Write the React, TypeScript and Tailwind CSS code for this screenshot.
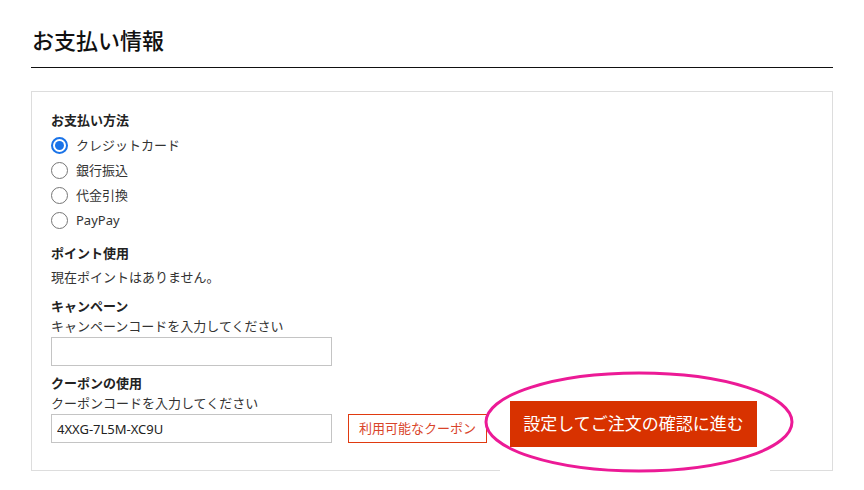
import { useState } from 'react';

const METHODS = ['クレジットカード', '銀行振込', '代金引換', 'PayPay'];

function Radio({ checked, label, onClick }: { checked: boolean; label: string; onClick: () => void }) {
  return (
    <label className="flex items-center h-[25px] cursor-pointer" onClick={onClick}>
      <span
        className={
          checked
            ? 'w-[17px] h-[17px] rounded-full border-2 border-[#1a73e8] flex items-center justify-center'
            : 'w-[17px] h-[17px] rounded-full border border-[#767676] bg-white'
        }
      >
        {checked && <span className="w-[9px] h-[9px] rounded-full bg-[#1a73e8]" />}
      </span>
      <span className="ml-[8px] text-[13px] text-[#333]">{label}</span>
    </label>
  );
}

export default function App() {
  const [method, setMethod] = useState(0);

  return (
    <div className="w-[864px] h-[490px] bg-white px-[31px] pt-[24px] text-[#333]" style={{ fontFamily: '"Noto Sans", "Noto Sans CJK JP", sans-serif' }}>
      <h2 className="text-[22px] font-medium leading-[32px] text-[#111] pl-[1px] pb-[11px] border-b border-[#111]">お支払い情報</h2>

      <div className="relative mt-[23px] w-[802px] h-[380px] border border-[#ddd] pl-[19px] pt-[18px]">
        <p className="text-[13px] font-bold leading-[20px] text-[#222]">お支払い方法</p>
        <div className="flex flex-col mt-[3px]">
          {METHODS.map((m, i) => (
            <Radio key={m} label={m} checked={method === i} onClick={() => setMethod(i)} />
          ))}
        </div>

        <p className="mt-[10px] text-[13px] font-bold leading-[20px] text-[#222]">ポイント使用</p>
        <p className="mt-[4px] text-[13px] leading-[20px]">現在ポイントはありません。</p>

        <p className="mt-[9px] text-[13px] font-bold leading-[20px] text-[#222]">キャンペーン</p>
        <p className="text-[13px] leading-[20px]">キャンペーンコードを入力してください</p>
        <input className="mt-[1px] block w-[281px] h-[29px] border border-[#c4c4c4] px-[5px] text-[13px] outline-none" />

        <p className="mt-[7px] text-[13px] font-bold leading-[20px] text-[#222]">クーポンの使用</p>
        <p className="text-[13px] leading-[20px]">クーポンコードを入力してください</p>
        <div className="flex items-center mt-[1px]">
          <input
            className="block w-[281px] h-[29px] border border-[#c4c4c4] px-[5px] text-[13px] text-[#222] outline-none"
            defaultValue="4XXG-7L5M-XC9U"
          />
          <button className="ml-[16px] h-[29px] px-[10px] border border-[#e03a10] text-[13px] text-[#d9442a] bg-white">
            利用可能なクーポン
          </button>
        </div>

        {/* white strip over the bottom border under the highlight */}
        <div className="absolute left-[468px] bottom-[-2px] w-[270px] h-[3px] bg-white" />

        <button className="absolute left-[478px] top-[309px] w-[247px] h-[46px] bg-[#d83200] text-white text-[17px] font-normal">
          設定してご注文の確認に進む
        </button>

        <svg className="absolute left-[450px] top-[277px]" width="315" height="108" viewBox="0 0 315 108">
          <ellipse cx="157" cy="53" rx="153" ry="49" fill="none" stroke="#ec1a96" strokeWidth="3" />
        </svg>
      </div>
    </div>
  );
}
